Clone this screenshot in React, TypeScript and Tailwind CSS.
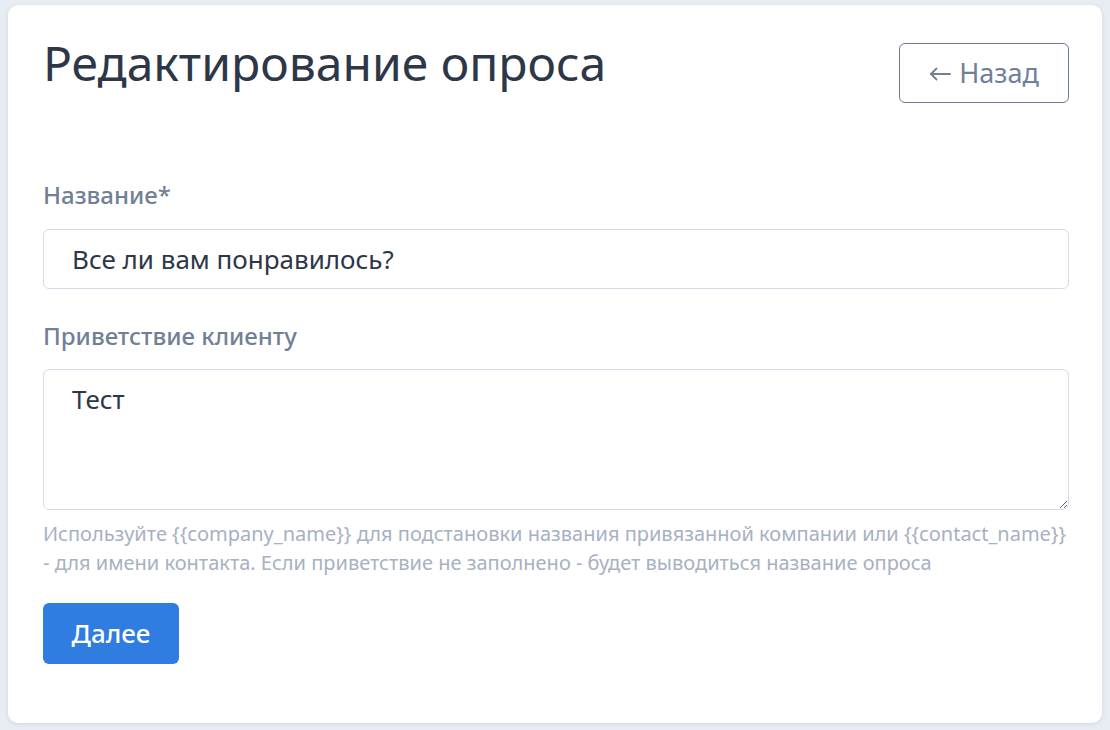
import React, { useState } from "react";

const App = () => {
  const [name, setName] = useState("Все ли вам понравилось?");
  const [greeting, setGreeting] = useState("Тест");

  return (
    <div
      className="min-h-[730px] bg-[#e8ecf3] pl-[8px] pr-[8px] pt-[5px] pb-[8px]"
      style={{ fontFamily: '"Noto Sans", "Open Sans", sans-serif' }}
    >
      <div className="bg-white rounded-[10px] shadow-[0_1px_4px_rgba(45,55,72,0.12)] pl-[35px] pr-[33px] pt-[30px] pb-[59px] w-[1094px]">
        <div className="flex items-start justify-between">
          <h1 className="text-[48px] leading-[56px] text-[#2d3748] font-normal">Редактирование опроса</h1>
          <button className="mt-[8px] h-[60px] w-[170px] border border-[#6b7a90] rounded-[6px] text-[27px] text-[#718096] flex items-center justify-center gap-[8px]">
            <svg width="22" height="14" viewBox="0 0 22 14" fill="none" stroke="#718096" strokeWidth="1.8" strokeLinecap="round" strokeLinejoin="round" className="mt-[1px]">
              <path d="M21 7H2" />
              <path d="M7.5 1.5L2 7l5.5 5.5" />
            </svg>
            <span>Назад</span>
          </button>
        </div>

        <div className="mt-[79px]">
          <label className="block text-[24px] leading-[26px] font-medium text-[#718096] mb-[21px]">Название*</label>
          <input
            value={name}
            onChange={(e) => setName(e.target.value)}
            className="w-full h-[60px] border border-[#d3ddea] rounded-[6px] px-[28px] text-[26px] text-[#2d3748] outline-none"
          />
        </div>

        <div className="mt-[34px]">
          <label className="block text-[24px] leading-[26px] font-medium text-[#718096] mb-[20px]">Приветствие клиенту</label>
          <textarea
            value={greeting}
            onChange={(e) => setGreeting(e.target.value)}
            className="block w-full h-[141px] border border-[#d3ddea] rounded-[6px] px-[28px] py-[12px] text-[26px] leading-[34px] text-[#2d3748] outline-none"
          />
          <p className="mt-[9px] text-[20px] leading-[29px] text-[#a6b1c2]">
            Используйте {"{{company_name}}"} для подстановки названия привязанной компании или {"{{contact_name}}"}
            <br />- для имени контакта. Если приветствие не заполнено - будет выводиться название опроса
          </p>
        </div>

        <button className="mt-[26px] h-[61px] w-[136px] bg-[#2f7de1] rounded-[6px] text-white text-[26px] font-medium">
          Далее
        </button>
      </div>
    </div>
  );
};

export default App;
